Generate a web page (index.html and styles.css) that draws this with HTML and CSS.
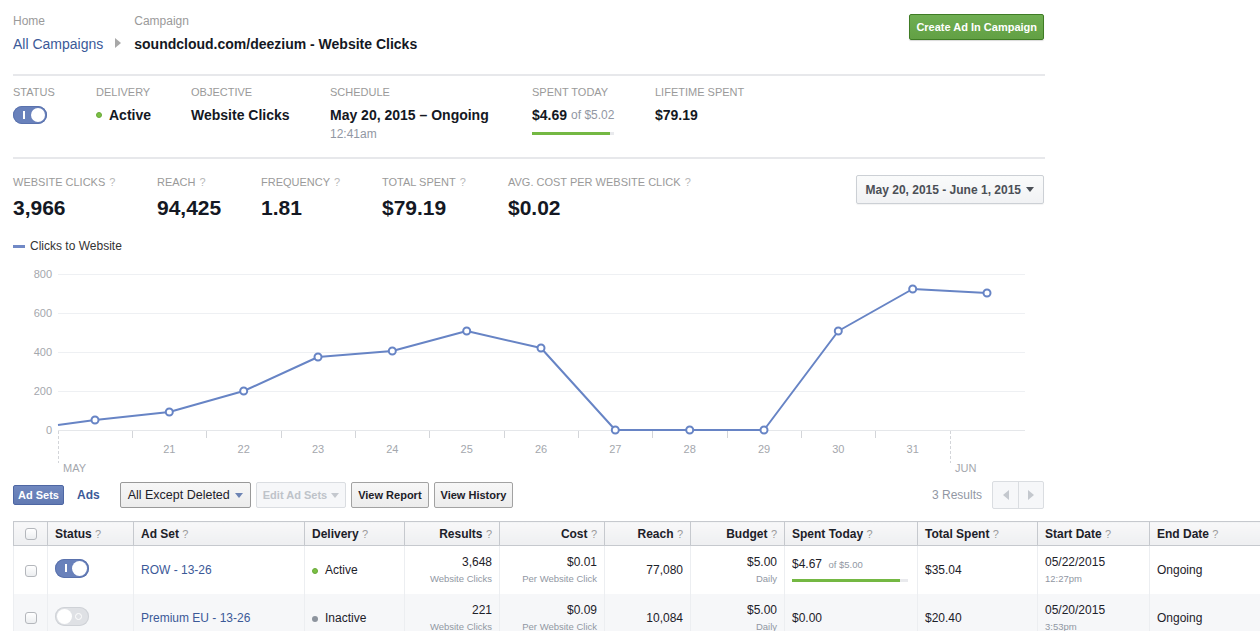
FILE: index.html
```html
<!DOCTYPE html>
<html>
<head>
<meta charset="utf-8">
<title>Campaign</title>
<link rel="stylesheet" href="styles.css">
</head>
<body>
<div class="page">
  <div class="wrap">
    <header class="top">
      <nav class="crumbs">
        <div class="crumb">
          <div class="crumb-label">Home</div>
          <a class="crumb-link" href="#">All Campaigns</a>
        </div>
        <span class="crumb-arrow"></span>
        <div class="crumb">
          <div class="crumb-label">Campaign</div>
          <div class="crumb-title">soundcloud.com/deezium - Website Clicks</div>
        </div>
      </nav>
      <button class="btn-create">Create Ad In Campaign</button>
    </header>

    <section class="summary">
      <div class="sum-col c1">
        <div class="label">STATUS</div>
        <div class="value"><span class="toggle on"><span class="mark"></span><span class="knob"></span></span></div>
      </div>
      <div class="sum-col c2">
        <div class="label">DELIVERY</div>
        <div class="value"><span class="dot green"></span>Active</div>
      </div>
      <div class="sum-col c3">
        <div class="label">OBJECTIVE</div>
        <div class="value">Website Clicks</div>
      </div>
      <div class="sum-col c4">
        <div class="label">SCHEDULE</div>
        <div class="value">May 20, 2015 – Ongoing</div>
        <div class="sub">12:41am</div>
      </div>
      <div class="sum-col c5">
        <div class="label">SPENT TODAY</div>
        <div class="spent-block">
          <div class="value">$4.69 <span class="of">of $5.02</span></div>
          <div class="sum-bar"><span class="fill" style="width:95%"></span></div>
        </div>
      </div>
      <div class="sum-col c6">
        <div class="label">LIFETIME SPENT</div>
        <div class="value">$79.19</div>
      </div>
    </section>

    <section class="metrics">
      <div class="metric m1"><div class="label">WEBSITE CLICKS <span class="q">?</span></div><div class="big">3,966</div></div>
      <div class="metric m2"><div class="label">REACH <span class="q">?</span></div><div class="big">94,425</div></div>
      <div class="metric m3"><div class="label">FREQUENCY <span class="q">?</span></div><div class="big">1.81</div></div>
      <div class="metric m4"><div class="label">TOTAL SPENT <span class="q">?</span></div><div class="big">$79.19</div></div>
      <div class="metric m5"><div class="label">AVG. COST PER WEBSITE CLICK <span class="q">?</span></div><div class="big">$0.02</div></div>
      <button class="date-picker">May 20, 2015 - June 1, 2015 <span class="caret dark"></span></button>
    </section>

    <div class="legend"><span class="legend-line"></span>Clicks to Website</div>

    <svg class="chart" width="1032" height="216" viewBox="0 0 1032 216">
      <g class="grid">
        <line x1="45" x2="1012" y1="14.5" y2="14.5"/>
        <line x1="45" x2="1012" y1="53.5" y2="53.5"/>
        <line x1="45" x2="1012" y1="92.5" y2="92.5"/>
        <line x1="45" x2="1012" y1="131.5" y2="131.5"/>
        <line class="base" x1="45" x2="1012" y1="170.5" y2="170.5"/>
      </g>
      <g class="ylab">
        <text x="39" y="18">800</text>
        <text x="39" y="57">600</text>
        <text x="39" y="96">400</text>
        <text x="39" y="135">200</text>
        <text x="39" y="174">0</text>
      </g>
      <g class="ticks">
        <path d="M119.5 171V178M193.5 171V178M268.5 171V178M342.5 171V178M416.5 171V178M491.5 171V178M565.5 171V178M639.5 171V178M714.5 171V178M788.5 171V178M862.5 171V178"/>
        <path class="dash" d="M45.5 171V203M937.5 171V203"/>
      </g>
      <g class="xlab">
        <text x="156.3" y="193">21</text>
        <text x="230.7" y="193">22</text>
        <text x="305" y="193">23</text>
        <text x="379.3" y="193">24</text>
        <text x="453.7" y="193">25</text>
        <text x="528" y="193">26</text>
        <text x="602.3" y="193">27</text>
        <text x="676.7" y="193">28</text>
        <text x="751" y="193">29</text>
        <text x="825.3" y="193">30</text>
        <text x="899.7" y="193">31</text>
        <text class="month" x="50" y="212">MAY</text>
        <text class="month" x="942" y="212">JUN</text>
      </g>
      <polyline class="series" points="45,165 82,160 156.3,152 230.7,131 305,97 379.3,91 453.7,71 528,88 602.3,170 676.7,170 751,170 825.3,71 899.7,29 974,33"/>
      <g class="pts">
        <circle cx="82" cy="160" r="3.5"/>
        <circle cx="156.3" cy="152" r="3.5"/>
        <circle cx="230.7" cy="131" r="3.5"/>
        <circle cx="305" cy="97" r="3.5"/>
        <circle cx="379.3" cy="91" r="3.5"/>
        <circle cx="453.7" cy="71" r="3.5"/>
        <circle cx="528" cy="88" r="3.5"/>
        <circle cx="602.3" cy="170" r="3.5"/>
        <circle cx="676.7" cy="170" r="3.5"/>
        <circle cx="751" cy="170" r="3.5"/>
        <circle cx="825.3" cy="71" r="3.5"/>
        <circle cx="899.7" cy="29" r="3.5"/>
        <circle cx="974" cy="33" r="3.5"/>
      </g>
    </svg>

    <div class="toolbar">
      <span class="tab active">Ad Sets</span>
      <a class="tab-link" href="#">Ads</a>
      <button class="btn drop">All Except Deleted <span class="caret blue"></span></button>
      <button class="btn bold disabled">Edit Ad Sets <span class="caret light"></span></button>
      <button class="btn bold">View Report</button>
      <button class="btn bold">View History</button>
      <span class="results">3 Results</span>
      <div class="pager"><button class="pg"><span class="tri-left"></span></button><button class="pg"><span class="tri-right"></span></button></div>
    </div>
  </div>

  <table class="grid-table">
    <colgroup>
      <col style="width:34px"><col style="width:86px"><col style="width:171px"><col style="width:100px"><col style="width:95px"><col style="width:105px"><col style="width:86px"><col style="width:94px"><col style="width:133px"><col style="width:120px"><col style="width:112px"><col style="width:120px">
    </colgroup>
    <thead>
      <tr>
        <th class="chk"><span class="checkbox"></span></th>
        <th>Status <span class="q">?</span></th>
        <th>Ad Set <span class="q">?</span></th>
        <th>Delivery <span class="q">?</span></th>
        <th class="num">Results <span class="q">?</span></th>
        <th class="num">Cost <span class="q">?</span></th>
        <th class="num">Reach <span class="q">?</span></th>
        <th class="num">Budget <span class="q">?</span></th>
        <th>Spent Today <span class="q">?</span></th>
        <th>Total Spent <span class="q">?</span></th>
        <th>Start Date <span class="q">?</span></th>
        <th>End Date <span class="q">?</span></th>
      </tr>
    </thead>
    <tbody>
      <tr>
        <td class="chk"><span class="checkbox"></span></td>
        <td><span class="toggle on small"><span class="mark"></span><span class="knob"></span></span></td>
        <td><a class="link" href="#">ROW - 13-26</a></td>
        <td><span class="dot green"></span>Active</td>
        <td class="num"><div class="main">3,648</div><div class="minor">Website Clicks</div></td>
        <td class="num"><div class="main">$0.01</div><div class="minor">Per Website Click</div></td>
        <td class="num">77,080</td>
        <td class="num"><div class="main">$5.00</div><div class="minor">Daily</div></td>
        <td><div class="main sp">$4.67 <span class="minor-inline">of $5.00</span></div><div class="row-bar"><span class="fill" style="width:93%"></span></div></td>
        <td>$35.04</td>
        <td><div class="main">05/22/2015</div><div class="minor">12:27pm</div></td>
        <td>Ongoing</td>
      </tr>
      <tr class="alt">
        <td class="chk"><span class="checkbox"></span></td>
        <td><span class="toggle off small"><span class="mark"></span><span class="knob"></span></span></td>
        <td><a class="link" href="#">Premium EU - 13-26</a></td>
        <td><span class="dot grey"></span>Inactive</td>
        <td class="num"><div class="main">221</div><div class="minor">Website Clicks</div></td>
        <td class="num"><div class="main">$0.09</div><div class="minor">Per Website Click</div></td>
        <td class="num">10,084</td>
        <td class="num"><div class="main">$5.00</div><div class="minor">Daily</div></td>
        <td>$0.00</td>
        <td>$20.40</td>
        <td><div class="main">05/20/2015</div><div class="minor">3:53pm</div></td>
        <td>Ongoing</td>
      </tr>
    </tbody>
  </table>
</div>
</body>
</html>
```

FILE: styles.css
```css
* { box-sizing: border-box; }

html, body {
  margin: 0;
  padding: 0;
  overflow: hidden;
  background: #fff;
}

body {
  width: 1260px;
  height: 631px;
  font-family: "Liberation Sans", Arial, Helvetica, sans-serif;
  font-size: 12px;
  color: #1d2129;
}

.page { padding-left: 13px; }
.wrap { width: 1032px; }

button { font-family: inherit; cursor: pointer; }

/* ---------- header ---------- */
.top {
  display: flex;
  justify-content: space-between;
  align-items: flex-start;
  height: 76px;
  padding-top: 14px;
  border-bottom: 2px solid #e7e8eb;
}

.crumbs { display: flex; align-items: flex-end; }
.crumb-label { font-size: 12px; line-height: 15px; color: #9a9a9a; }
.crumb-link, .crumb-title {
  display: block;
  margin-top: 6px;
  font-size: 14px;
  line-height: 18px;
}
.crumb-link { color: #3b5998; text-decoration: none; }
.crumb-title { font-weight: bold; color: #141823; }
.crumb-arrow {
  width: 0; height: 0;
  margin: 0 13px 5px 12px;
  border-left: 6px solid #a8a8a8;
  border-top: 5px solid transparent;
  border-bottom: 5px solid transparent;
}

.btn-create {
  height: 26px;
  margin-right: 1px;
  padding: 0 6px;
  background: linear-gradient(#6fae52, #62a044);
  border: 1px solid #3f7c25;
  border-radius: 2px;
  color: #fff;
  font-size: 11px;
  font-weight: bold;
  box-shadow: 0 1px 1px rgba(0,0,0,.15);
}

/* ---------- summary ---------- */
.summary {
  display: flex;
  height: 83px;
  padding-top: 9px;
  border-bottom: 2px solid #e7e8eb;
}
.label {
  font-size: 11px;
  line-height: 14px;
  color: #9a9a9a;
  white-space: nowrap;
}
.label .q { color: #b8b8b8; margin-left: 1px; }
.sum-col .value {
  margin-top: 7px;
  height: 18px;
  font-size: 14px;
  line-height: 18px;
  font-weight: bold;
  color: #141823;
  display: flex;
  align-items: center;
  white-space: nowrap;
}
.c1 { width: 83px; }
.c2 { width: 95px; }
.c3 { width: 139px; }
.c4 { width: 202px; }
.c5 { width: 123px; }
.sub { margin-top: 3px; font-size: 12px; line-height: 14px; color: #9197a3; }
.spent-block { display: inline-block; }
.of { font-weight: normal; font-size: 12px; color: #9197a3; margin-left: 4px; }
.sum-bar { margin-top: 8px; height: 3px; background: #e9eaed; }
.sum-bar .fill, .row-bar .fill { display: block; height: 100%; background: #74b843; }

.dot {
  display: inline-block;
  width: 6px; height: 6px;
  border-radius: 50%;
  margin-right: 7px;
}
.dot.green { background: #7ac143; border: 1px solid #6aa83a; }
.dot.grey { background: #8d949e; }

/* toggles */
.toggle {
  position: relative;
  display: inline-block;
  width: 34px;
  height: 18px;
  border-radius: 9px;
}
.toggle.small { height: 19px; border-radius: 10px; }
.toggle.on { background: #6981bb; box-shadow: inset 0 0 0 1px #5a72ad; }
.toggle.off { background: #dfe1e5; box-shadow: inset 0 0 0 1px #cfd2d7; }
.toggle .knob {
  position: absolute;
  top: 2px;
  width: 14px; height: 14px;
  border-radius: 50%;
  background: #fff;
}
.toggle.small .knob { width: 15px; height: 15px; }
.toggle.on .knob { right: 2px; }
.toggle.off .knob { left: 2px; }
.toggle.on .mark {
  position: absolute;
  left: 10px; top: 5px;
  width: 2px; height: 8px;
  background: #fff;
}
.toggle.off .mark {
  position: absolute;
  right: 7px; top: 6px;
  width: 7px; height: 7px;
  border-radius: 50%;
  border: 1.5px solid #fff;
}

/* ---------- metrics ---------- */
.metrics {
  display: flex;
  align-items: flex-start;
  padding-top: 16px;
}
.metric .big {
  margin-top: 7px;
  font-size: 21px;
  line-height: 24px;
  font-weight: bold;
  color: #141823;
}
.m1 { width: 144px; }
.m2 { width: 104px; }
.m3 { width: 121px; }
.m4 { width: 126px; }

.date-picker {
  margin-left: auto;
  margin-right: 1px;
  height: 29px;
  padding: 0 9px;
  display: flex;
  align-items: center;
  gap: 5px;
  background: linear-gradient(#fafbfb, #f1f2f4);
  border: 1px solid #ccd0d5;
  border-radius: 2px;
  color: #4b4f56;
  font-size: 12px;
  font-weight: bold;
  box-shadow: 0 1px 1px rgba(0,0,0,.05);
}

.caret {
  display: inline-block;
  width: 0; height: 0;
  border-left: 4px solid transparent;
  border-right: 4px solid transparent;
  border-top: 5px solid #4b4f56;
  vertical-align: middle;
}
.caret.blue { border-top-color: #6d84b4; }
.caret.light { border-top-color: #c4c8ce; }

/* ---------- legend + chart ---------- */
.legend {
  display: flex;
  align-items: center;
  margin-top: 19px;
  font-size: 12px;
  line-height: 14px;
  color: #333;
}
.legend-line {
  width: 12px;
  height: 3px;
  margin-right: 5px;
  background: #7189c6;
}
.chart { display: block; margin-top: 7px; overflow: visible; }
.chart .grid line { stroke: #eef0f3; stroke-width: 1; }
.chart .grid line.base { stroke: #e5e7ea; }
.chart text {
  font-family: "Liberation Sans", Arial, sans-serif;
  font-size: 11px;
  fill: #a4a7ad;
}
.chart .ylab text { text-anchor: end; }
.chart .xlab text { text-anchor: middle; }
.chart .xlab text.month { text-anchor: start; }
.chart .ticks path { stroke: #d3d5d9; stroke-width: 1; fill: none; }
.chart .ticks path.dash { stroke-dasharray: 3 2; }
.chart .series { fill: none; stroke: #6784c5; stroke-width: 2; stroke-linejoin: round; }
.chart .pts circle { fill: #fff; stroke: #6784c5; stroke-width: 2; }

/* ---------- toolbar ---------- */
.toolbar {
  display: flex;
  align-items: center;
  height: 28px;
  margin-top: 5px;
}
.tab {
  height: 20px;
  padding: 0 4px;
  display: inline-flex;
  align-items: center;
  font-size: 11px;
  font-weight: bold;
}
.tab.active {
  background: linear-gradient(#7088bf, #6179b2);
  border: 1px solid #4e67a3;
  border-radius: 2px;
  color: #fff;
}
.tab-link {
  margin-left: 13px;
  color: #3b5998;
  font-weight: bold;
  font-size: 12px;
  text-decoration: none;
}
.btn {
  height: 26px;
  padding: 0 6px;
  margin-left: 5px;
  display: inline-flex;
  align-items: center;
  gap: 4px;
  background: linear-gradient(#f7f7f7, #ececec);
  border: 1px solid #a2a2a2;
  border-radius: 2px;
  color: #1d2129;
  font-size: 12px;
}
.btn.bold { font-weight: bold; font-size: 11px; }
.btn.drop {
  margin-left: 20px;
  padding: 0 7px;
  font-size: 12.5px;
  gap: 5px;
  border-color: #999;
}
.btn.disabled {
  color: #bec3c9;
  border-color: #dadde1;
  background: #f6f7f9;
}
.results {
  margin-left: auto;
  color: #9197a3;
  font-size: 12px;
}
.pager {
  display: flex;
  margin-left: 10px;
  margin-right: 1px;
  height: 28px;
  border: 1px solid #dadde1;
  border-radius: 2px;
  background: #f6f7f9;
}
.pg {
  width: 25px;
  height: 100%;
  padding: 0;
  border: 0;
  background: transparent;
  display: flex;
  align-items: center;
  justify-content: center;
}
.pg + .pg { border-left: 1px solid #dadde1; }
.tri-left, .tri-right {
  width: 0; height: 0;
  border-top: 5px solid transparent;
  border-bottom: 5px solid transparent;
}
.tri-left { border-right: 6px solid #c4c8ce; }
.tri-right { border-left: 6px solid #c4c8ce; }

/* ---------- table ---------- */
.grid-table {
  margin-top: 12px;
  width: 1256px;
  table-layout: fixed;
  border-collapse: collapse;
  font-size: 12px;
}
.grid-table th {
  height: 24px;
  padding: 0 7px;
  background: linear-gradient(#f8f8f9, #eeeff1);
  border: 1px solid #c6c9ce;
  text-align: left;
  font-weight: bold;
  color: #1d2129;
  white-space: nowrap;
}
.grid-table th .q { font-weight: normal; font-size: 11px; color: #9a9a9a; }
.grid-table td {
  height: 48px;
  padding: 0 7px;
  border-left: 1px solid #eceef1;
  border-right: 1px solid #eceef1;
  vertical-align: middle;
  white-space: nowrap;
  color: #1d2129;
}
.grid-table tr.alt td { background: #f6f7f9; }
.grid-table .num { text-align: right; }
.grid-table .chk { text-align: center; padding: 0; }
.checkbox {
  display: inline-block;
  width: 12px;
  height: 12px;
  vertical-align: middle;
  border: 1px solid #b4b7bc;
  border-radius: 3px;
  background: linear-gradient(#fff, #eceef0);
}
.main { line-height: 15px; }
.minor {
  margin-top: 3px;
  font-size: 9.5px;
  line-height: 12px;
  color: #9197a3;
}
.minor-inline { font-size: 9.5px; color: #9197a3; margin-left: 3px; }
.link { color: #3b5998; text-decoration: none; }
.row-bar {
  margin-top: 7px;
  width: 116px;
  height: 3px;
  background: #e9eaed;
}
```
